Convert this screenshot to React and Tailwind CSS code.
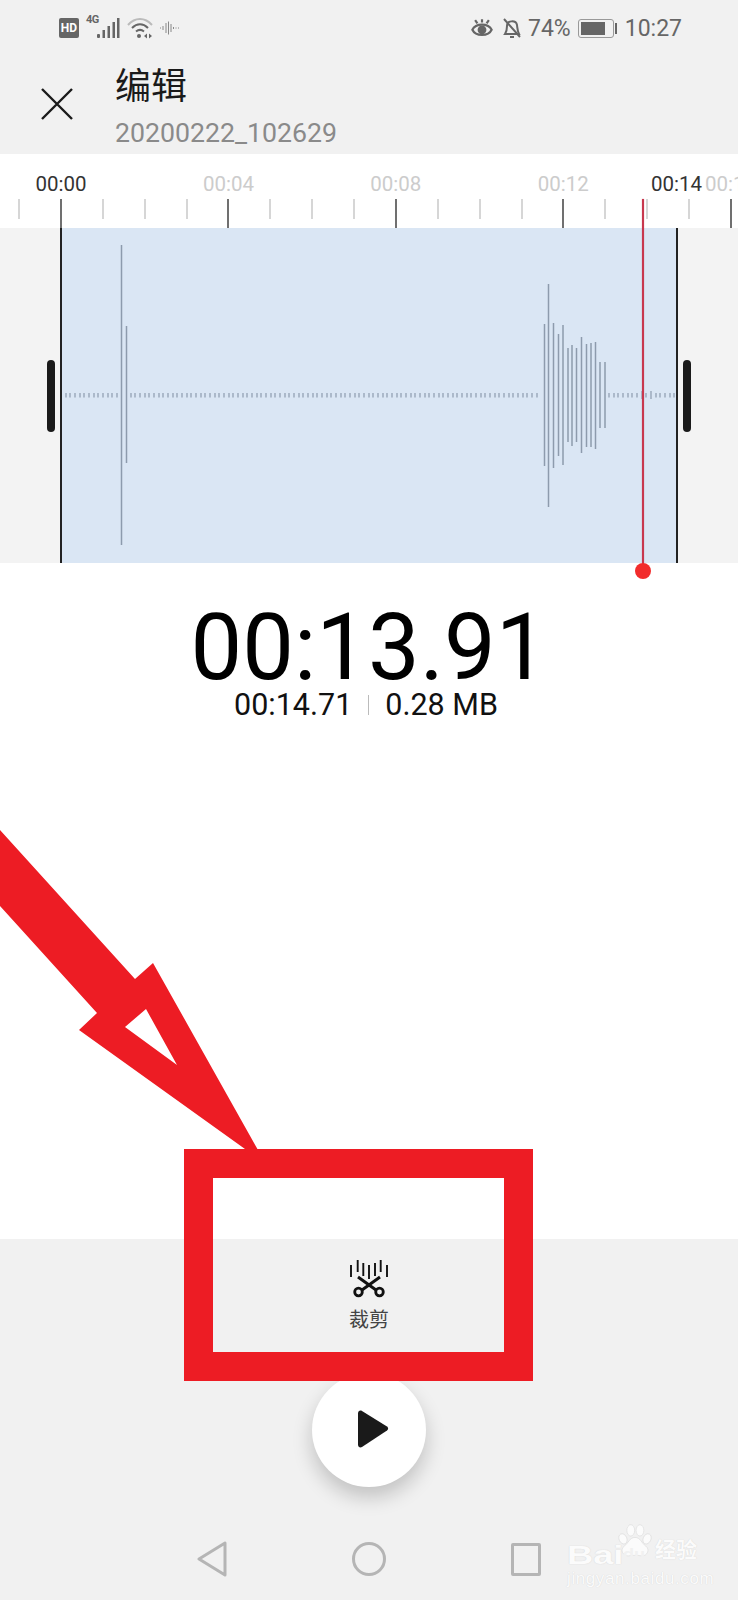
import React from "react";

const minorTicks = Array.from({ length: 18 }, (_, i) => i);

// x, top, bottom of the tall peaks in the wave form
const peaks = [
  [121.5, 245, 545],
  [126.5, 326, 463],
  [544.5, 324, 466],
  [548.5, 284, 507],
  [553.5, 323, 468],
  [558.5, 334, 456],
  [563, 325, 465],
  [568, 348, 442],
  [572, 345, 446],
  [576.5, 348, 442],
  [581.5, 337, 453],
  [586.5, 344, 447],
  [591, 343, 447],
  [595.5, 342, 449],
  [600, 362, 428],
  [605, 362, 428],
];

const quiet = [];
for (let x = 65.5; x < 118; x += 4.67) quiet.push(Math.round(x));
for (let x = 130.5; x < 541; x += 4.67) quiet.push(Math.round(x));
for (let x = 609; x < 675; x += 4.67) quiet.push(Math.round(x));

function Waveform() {
  return (
    <svg width="614" height="335" viewBox="62 228 614 335" className="block">
      {quiet.map((x) => {
        const tall = Math.abs(x - 651) < 2 || Math.abs(x - 642) < 2 || Math.abs(x - 273) < 2;
        return (
          <line key={x} x1={x} x2={x} y1={tall ? 391 : 393} y2={tall ? 399 : 397.5} stroke="#8d9bad" strokeWidth="1.2" />
        );
      })}
      {peaks.map(([x, y1, y2]) => (
        <line key={x} x1={x} x2={x} y1={y1} y2={y2} stroke="#8d9bad" strokeWidth="1.5" />
      ))}
    </svg>
  );
}

function StatusLeft() {
  return (
    <div className="flex items-center">
      <div className="w-[20px] h-[20px] rounded-[2px] bg-[#666] flex items-center justify-center text-white text-[12px] font-bold leading-none">HD</div>
      <div className="relative ml-[6px]">
        <span className="absolute left-[1px] top-[-3px] text-[11px] font-bold leading-none tracking-[-0.5px] text-[#666]">4G</span>
        <svg width="36" height="22" viewBox="0 0 36 22" fill="#666" className="block">
          <rect x="12" y="17" width="3" height="4" rx="1" />
          <rect x="17.5" y="13" width="2.5" height="8" />
          <rect x="22.5" y="9" width="2.5" height="12" />
          <rect x="27.5" y="5" width="2.5" height="16" />
          <rect x="32" y="1" width="2.5" height="20" />
        </svg>
      </div>
      <svg width="26" height="22" viewBox="0 0 26 22" className="ml-[6px]" fill="none">
        <path d="M1 8 C8 0 18 0 25 8" stroke="#bbb" strokeWidth="2" />
        <path d="M5 11 C10 6 16 6 21 11" stroke="#666" strokeWidth="2" />
        <path d="M9 14.500 C11.500 12.500 14.500 12.500 17 14.500" stroke="#666" strokeWidth="2" />
        <circle cx="12" cy="19" r="2" fill="#666" />
        <path d="M17 19 L20 16.500 V21.500 Z M25 19 L22 16.500 V21.500 Z" fill="#666" />
      </svg>
      <svg width="20" height="14" viewBox="0 0 20 14" className="ml-[6px]" stroke="#888" strokeWidth="1">
        <path d="M1 7 H2 M4 5 V9 M7 2 V12 M9.500 0.500 V13.500 M12 3 V11 M14.500 6 V8 M16.500 7 H17.500 M19 7 H20" />
      </svg>
    </div>
  );
}

function StatusRight() {
  return (
    <div className="flex items-center text-[23px] text-[#666] leading-none">
      <svg width="22" height="22" viewBox="0 0 24 24" fill="none" stroke="#666" strokeWidth="2.4">
        <path d="M1.500 14 C5 6.500 19 6.500 22.500 14 C19 21.500 5 21.500 1.500 14 Z" />
        <circle cx="12" cy="14" r="4.800" fill="#666" stroke="none" />
        <path d="M12 2.500 V6 M4.500 3.500 L7 7 M19.500 3.500 L17 7" />
      </svg>
      <svg width="20" height="22" viewBox="0 0 20 22" fill="none" stroke="#666" strokeWidth="2" className="ml-[9px]">
        <path d="M3 17 C5 14 5 11 5 9 C5 3 14 3 15 8 C15.500 12 15.500 14 17 17 Z" />
        <path d="M2 2 L18 20 M8 20 H12" />
      </svg>
      <span className="ml-[6px]">74%</span>
      <div className="ml-[7px] flex items-center">
        <div className="w-[36px] h-[19px] rounded-[3px] border border-[#999] p-[2px] flex">
          <div className="w-[24px] bg-[#666]" />
        </div>
        <div className="ml-[1px] w-[2px] h-[11px] bg-[#666]" />
      </div>
      <span className="ml-[8px]">10:27</span>
    </div>
  );
}

function Ruler() {
  return (
    <div className="relative h-[74px] bg-white overflow-hidden">
      <div className="flex gap-[117.4px] pl-[35.5px] pt-[18px] h-[45px] text-[20.5px] leading-[24px] text-[#ccc] whitespace-nowrap">
        <span className="w-[50px] text-[#333]">00:00</span>
        <span className="w-[50px]">00:04</span>
        <span className="w-[50px]">00:08</span>
        <span className="w-[50px]">00:12</span>
        <span className="w-[50px]">00:16</span>
      </div>
      <span className="absolute left-[651px] top-[18px] bg-white text-[20.5px] leading-[24px] text-[#333]">00:14</span>
      <div className="flex gap-[39.88px] pl-[18px]">
        {minorTicks.map((i) =>
          i % 4 === 1 ? (
            <div key={i} className="w-[2px] h-[29px] bg-[#707070]" />
          ) : (
            <div key={i} className="w-[2px] h-[20px] bg-[#d6d6d6]" />
          )
        )}
      </div>
    </div>
  );
}

function ScissorsIcon() {
  return (
    <svg width="40" height="38" viewBox="349 1261 40 38" fill="none" stroke="#111">
      <path
        strokeWidth="1.9"
        d="M351 1266 V1278 M357.700 1261 V1273 M363.300 1264 V1277 M369 1266 V1280 M375 1264 V1277 M380.700 1261 V1273 M387 1266 V1278"
      />
      <path strokeWidth="3" d="M358 1278 L376 1291 M380 1278 L362 1291" />
      <circle cx="358.500" cy="1293" r="3.800" strokeWidth="2.8" />
      <circle cx="379.500" cy="1293" r="3.800" strokeWidth="2.8" />
    </svg>
  );
}

function Watermark() {
  return (
    <div className="absolute left-[567px] top-[1520px] w-[135px] h-[72px] text-[#fbfbfb] [text-shadow:0_0_1px_#cfcfcf] leading-none font-['Liberation_Sans','Noto_Sans_CJK_SC',sans-serif]">
      <span className="absolute left-0 top-[23px] origin-left scale-x-[1.45] text-[25px] font-bold">Bai</span>
      <svg width="34" height="38" viewBox="0 0 48 46" className="absolute left-[51px] top-[2px]" fill="#fbfbfb" stroke="#d8d8d8" strokeWidth="0.8">
        <ellipse cx="7" cy="20" rx="5.500" ry="7.500" transform="rotate(-25 7 20)" />
        <ellipse cx="18" cy="8" rx="5.500" ry="8" />
        <ellipse cx="31" cy="8" rx="5.500" ry="8" />
        <ellipse cx="41" cy="20" rx="5.500" ry="7.500" transform="rotate(25 41 20)" />
        <path d="M24 18 C32 18 33 26 39 30 C46 35 41 45 33 44 C28 43 20 43 15 44 C7 45 2 35 9 30 C15 26 16 18 24 18 Z" />
      </svg>
      <span className="absolute left-[56px] top-[27px] origin-left scale-x-[1.3] text-[14px] font-bold text-[#f1f1f1] [text-shadow:none]">du</span>
      <span className="absolute left-[88px] top-[19px] text-[21px] font-bold whitespace-nowrap">经验</span>
      <span className="absolute left-0 top-[50px] text-[17px] tracking-[0.6px] whitespace-nowrap">jingyan.baidu.com</span>
    </div>
  );
}

export default function App() {
  return (
    <div className="relative w-[738px] h-[1600px] overflow-hidden bg-white font-[Roboto,'Noto_Sans_CJK_SC',sans-serif]">
      {/* Header */}
      <div className="h-[154px] bg-[#f1f1f1]">
        <div className="h-[56px] flex items-center justify-between pl-[59px] pr-[56px]">
          <StatusLeft />
          <StatusRight />
        </div>
        <div className="flex pl-[41px]">
          <svg width="32" height="32" viewBox="0 0 32 32" className="mt-[32px]" stroke="#1a1a1a" strokeWidth="2.4">
            <path d="M1 1 L31 31 M31 1 L1 31" />
          </svg>
          <div className="ml-[42px]">
            <div className="text-[36px] leading-[44px] mt-[9px] text-[#1a1a1a]">编辑</div>
            <div className="text-[26.7px] leading-[30px] mt-[9px] text-[#8a8a8a]">20200222_102629</div>
          </div>
        </div>
      </div>

      <Ruler />

      {/* Trim band */}
      <div className="h-[335px] flex bg-[#f3f3f3]">
        <div className="w-[60px] flex items-center pl-[47px]">
          <div className="w-[8px] h-[72px] rounded-full bg-[#1a1a1a]" />
        </div>
        <div className="w-[618px] border-x-2 border-x-[#222] bg-[#dae6f4]">
          <Waveform />
        </div>
        <div className="flex items-center pl-[5px]">
          <div className="w-[8px] h-[72px] rounded-full bg-[#1a1a1a]" />
        </div>
      </div>

      {/* Time read-out */}
      <div className="h-[676px] flex flex-col items-center pt-[45px] text-black">
        <div className="text-[92px] leading-[80px] font-normal">00:13.91</div>
        <div className="flex items-center text-[30.5px] leading-[34px] mr-[6px] text-[#111]">
          <span>00:14.71</span>
          <div className="w-[1px] h-[20px] bg-[#bbb] mx-[16px]" />
          <span>0.28 MB</span>
        </div>
      </div>

      {/* Bottom controls */}
      <div className="h-[361px] bg-[#f1f1f1] flex flex-col items-center pt-[21px]">
        <ScissorsIcon />
        <div className="text-[20px] leading-[26px] mt-[9px] text-[#444]">裁剪</div>
        <div className="mt-[40px] w-[114px] h-[114px] rounded-full bg-white shadow-[0_10px_20px_rgba(0,0,0,0.2)] flex items-center justify-center">
          <svg width="32" height="38" viewBox="0 0 32 38" className="ml-[8px] -mt-[2px]" fill="#1a1a1a">
            <path d="M1 3.500 C1 1 3 0 5 1 L30 16.500 C31.500 17.500 31.500 19.500 30 20.500 L5 37 C3 38 1 37 1 34.500 Z" />
          </svg>
        </div>
        <div className="mt-[54px] flex items-center justify-center gap-[125px]">
          <svg width="30" height="36" viewBox="0 0 30 36" fill="none" stroke="#b5b5b5" strokeWidth="3" strokeLinejoin="round">
            <path d="M28 2 V34 L2 18 Z" />
          </svg>
          <div className="w-[34px] h-[34px] rounded-full border-[3px] border-[#b5b5b5]" />
          <div className="w-[30px] h-[33px] rounded-[2px] border-[3px] border-[#b5b5b5]" />
        </div>
      </div>

      {/* Playhead */}
      <div className="absolute left-[642px] top-[199px] w-[2px] h-[365px] bg-[#c8384e] shadow-[0_0_1px_#c0485c]" />
      <div className="absolute left-[635px] top-[563px] w-[16px] h-[16px] rounded-full bg-[#f22c2c]" />

      {/* Red annotation arrow and frame */}
      <svg width="300" height="400" viewBox="0 800 300 400" className="absolute left-0 top-[800px]">
        <path
          fill="#ed1c24"
          fillRule="evenodd"
          d="M0 830 L135 979 L153 963 L258 1150 L245 1149 L79 1030 L97 1013 L0 906 Z M146 1009 L125 1027 L177 1065 Z"
        />
      </svg>
      <div className="absolute left-[184px] top-[1149px] w-[349px] h-[232px] border-[29px] border-[#ed1c24]" />

      <Watermark />
    </div>
  );
}
